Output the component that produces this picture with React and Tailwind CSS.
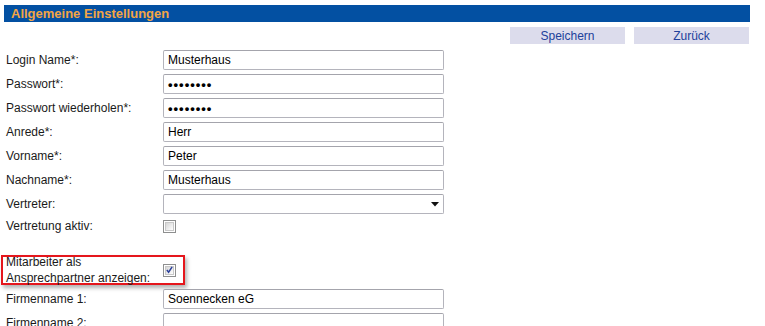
import React from "react";

const fields = [
  { label: "Login Name*:", value: "Musterhaus" },
  { label: "Passwort*:", value: "••••••••", secret: true },
  { label: "Passwort wiederholen*:", value: "••••••••", secret: true },
  { label: "Anrede*:", value: "Herr" },
  { label: "Vorname*:", value: "Peter" },
  { label: "Nachname*:", value: "Musterhaus" },
];

const TextBox = ({ value, secret, children }) => (
  <div className="relative flex items-center w-[281px] h-[20px] border border-[#b4b4bc] border-t-[#a4a4ac] rounded-[2px] bg-white pl-[4px] text-[12px] text-black">
    {secret ? (
      <span className="font-bold text-[13px] tracking-[1px] leading-none">{value}</span>
    ) : (
      value
    )}
    {children}
  </div>
);

const CheckBox = ({ checked }) => (
  <div className="w-[13px] h-[13px] border border-[#8e8f8f] p-px bg-white">
    <div className="w-full h-full border border-[#c8c8c8] bg-gradient-to-br from-[#d6d6d6] to-white flex items-center justify-center">
      {checked && (
        <svg width="8" height="8" viewBox="0 0 8 8">
          <path d="M1 4 L3 6.5 L7 0.5" fill="none" stroke="#2a3f9a" strokeWidth="1.7" />
        </svg>
      )}
    </div>
  </div>
);

const Row = ({ label, children, h = "h-[24px]" }) => (
  <div className={`flex items-center ${h}`}>
    <div className="w-[157px] text-[12px] text-[#1a1a1a]">{label}</div>
    {children}
  </div>
);

export default function App() {
  return (
    <div className="w-[765px] h-[326px] overflow-hidden bg-white font-['Liberation_Sans',Arial,sans-serif]">
      <div className="pt-[5px] pl-[4px]">
        <div className="w-[746px] h-[17px] bg-[#0350a2] flex items-center pl-[7px]">
          <span className="text-[13px] font-bold text-[#f3a545]">Allgemeine Einstellungen</span>
        </div>
      </div>

      <div className="flex justify-end gap-[9px] pr-[16px] mt-[5px]">
        <button className="w-[115px] h-[17px] bg-[#dcdcec] text-[12px] text-[#21419b] leading-none">Speichern</button>
        <button className="w-[115px] h-[17px] bg-[#dcdcec] text-[12px] text-[#21419b] leading-none">Zurück</button>
      </div>

      <div className="pl-[6px] mt-[4px]">
        {fields.map((f) => (
          <Row key={f.label} label={f.label}>
            <TextBox value={f.value} secret={f.secret} />
          </Row>
        ))}
        <Row label="Vertreter:">
          <TextBox value="">
            <svg className="absolute right-[4px] top-[7px]" width="8" height="5" viewBox="0 0 8 5">
              <path d="M0 0 H8 L4 4.5 Z" fill="#111" />
            </svg>
          </TextBox>
        </Row>
        <Row label="Vertretung aktiv:" h="h-[20px]">
          <CheckBox />
        </Row>
      </div>

      <div className="ml-[1px] mt-[19px] w-[184px] h-[30px] border-2 border-[#e5161c] shadow-[2px_3px_4px_rgba(0,0,0,0.3)] flex items-center pl-[3px]">
        <div className="w-[157px] text-[12px] leading-[16px] text-[#1a1a1a]">
          Mitarbeiter als
          <br />
          Ansprechpartner anzeigen:
        </div>
        <CheckBox checked />
      </div>

      <div className="pl-[6px] mt-[2px]">
        <Row label="Firmenname 1:">
          <TextBox value="Soennecken eG" />
        </Row>
        <Row label="Firmenname 2:">
          <TextBox value="" />
        </Row>
      </div>
    </div>
  );
}
